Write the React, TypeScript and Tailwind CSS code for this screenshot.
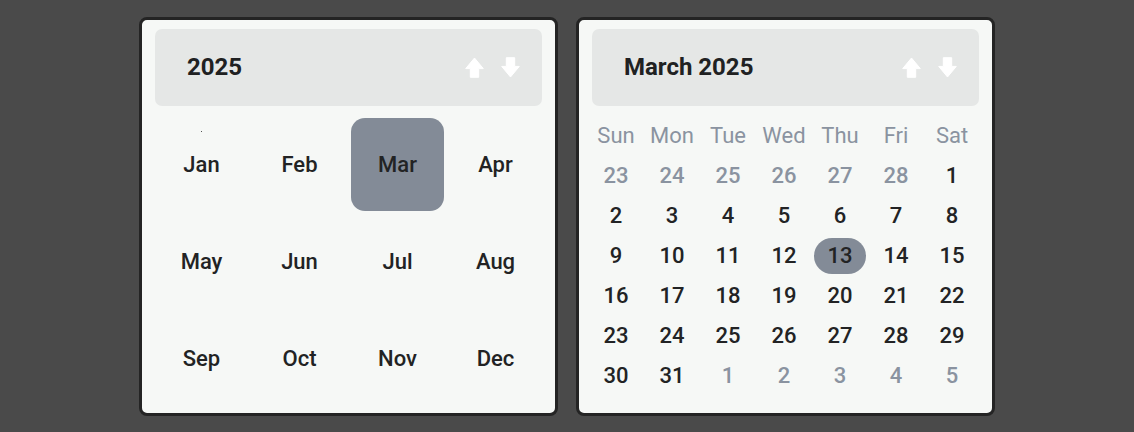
const months = [
  'Jan', 'Feb', 'Mar', 'Apr',
  'May', 'Jun', 'Jul', 'Aug',
  'Sep', 'Oct', 'Nov', 'Dec',
]

const weekdays = ['Sun', 'Mon', 'Tue', 'Wed', 'Thu', 'Fri', 'Sat']

type Day = { n: number; muted?: boolean }

function buildDays(): Day[] {
  const days: Day[] = []
  for (let n = 23; n <= 28; n++) days.push({ n, muted: true })
  for (let n = 1; n <= 31; n++) days.push({ n })
  for (let n = 1; n <= 5; n++) days.push({ n, muted: true })
  return days
}

function Arrow({ down }: { down?: boolean }) {
  return (
    <svg
      width="19"
      height="21"
      viewBox="0 0 19 21"
      className={down ? 'rotate-180' : ''}
    >
      <path
        d="M9.5 1 L18.3 11.6 L13.7 11.6 L13.7 20.3 L5.3 20.3 L5.3 11.6 L0.7 11.6 Z"
        fill="#ffffff"
        stroke="#ffffff"
        strokeWidth="1"
        strokeLinejoin="round"
      />
    </svg>
  )
}

function Header({ title }: { title: string }) {
  return (
    <div className="flex h-[77px] items-center justify-between rounded-[7px] bg-[#e5e7e6] pl-8 pr-[22px]">
      <span className="text-2xl font-bold text-[#202122]">{title}</span>
      <div className="flex items-center gap-[17px]">
        <Arrow />
        <Arrow down />
      </div>
    </div>
  )
}

function MonthCard() {
  return (
    <div className="flex w-[419px] flex-col rounded-lg border-[3px] border-[#242424] bg-[#f6f8f6] px-[13px] pt-[9px]">
      <Header title="2025" />
      <div className="mt-3 grid grid-cols-4 gap-x-[5px] gap-y-1">
        {months.map((m, i) => (
          <div
            key={m}
            className={`relative flex h-[93px] items-center justify-center rounded-[14px] text-[22px] font-medium text-[#222324] ${
              m === 'Mar' ? 'bg-[#838b97]' : ''
            }`}
          >
            {i === 0 && (
              <span className="absolute left-[46px] top-[13px] h-px w-px bg-[#555]" />
            )}
            {m}
          </div>
        ))}
      </div>
    </div>
  )
}

function DayCard() {
  const days = buildDays()
  return (
    <div className="flex w-[419px] flex-col rounded-lg border-[3px] border-[#242424] bg-[#f6f8f6] px-[13px] pt-[9px]">
      <Header title="March 2025" />
      <div className="-ml-1 mt-[10px] grid grid-cols-[repeat(7,56px)]">
        {weekdays.map((w) => (
          <div
            key={w}
            className="flex h-10 items-center justify-center text-[22px] text-[#8a93a0]"
          >
            {w}
          </div>
        ))}
        {days.map((d, i) => (
          <div key={i} className="flex h-10 items-center justify-center p-[2px]">
            <div
              className={`flex h-full w-full items-center justify-center rounded-full text-[22px] font-medium ${
                d.muted ? 'text-[#8a93a0]' : 'text-[#222324]'
              } ${!d.muted && d.n === 13 ? 'bg-[#838b97]' : ''}`}
            >
              {d.n}
            </div>
          </div>
        ))}
      </div>
    </div>
  )
}

export default function App() {
  return (
    <div
      className="flex h-[432px] w-full items-center justify-center bg-[#4a4a4a]"
      style={{ fontFamily: 'Roboto, "Noto Sans", sans-serif' }}
    >
      <div className="flex h-[399px] gap-[18px]">
        <MonthCard />
        <DayCard />
      </div>
    </div>
  )
}
